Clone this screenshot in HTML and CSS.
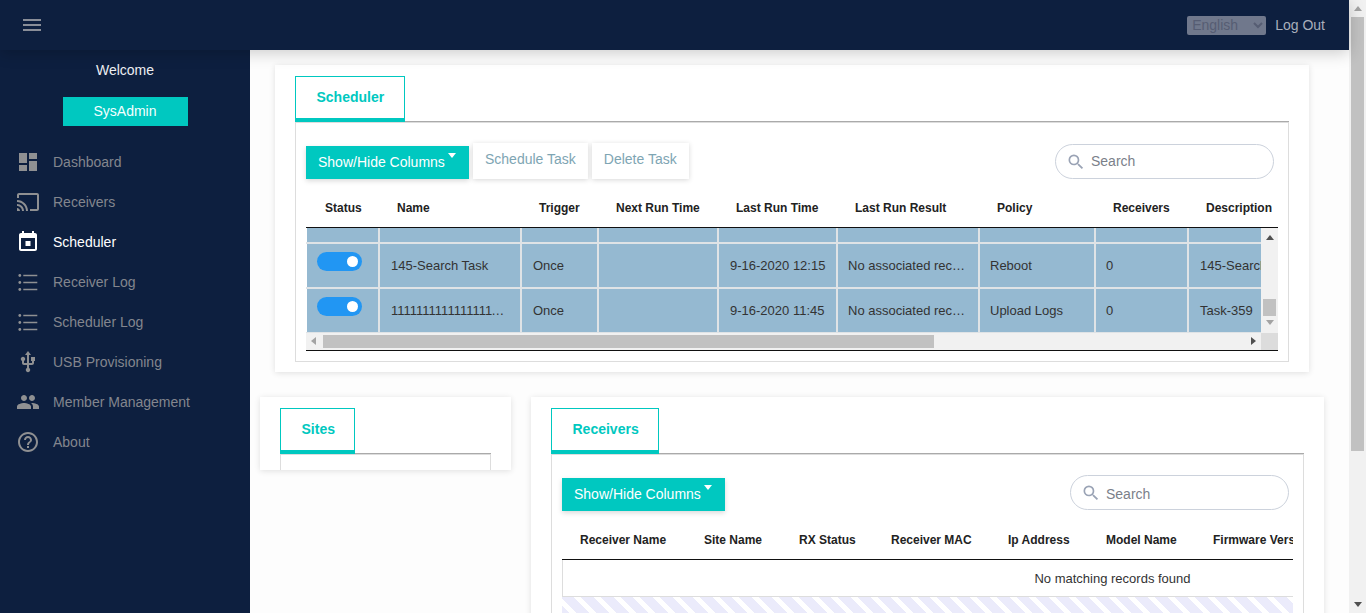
FILE: index.html
```html
<!DOCTYPE html>
<html lang="en">
<head>
<meta charset="utf-8">
<title>Scheduler</title>
<link rel="stylesheet" href="styles.css">
</head>
<body>
<div class="app">
  <div class="page">
    <header class="topbar">
      <button class="burger" aria-label="Menu"><span></span><span></span><span></span></button>
      <div class="top-right">
        <select class="lang"><option>English</option></select>
        <a class="logout">Log Out</a>
      </div>
    </header>
    <div class="below">
      <aside class="sidebar">
        <div class="welcome">Welcome</div>
        <div class="role">SysAdmin</div>
        <nav class="menu">
          <a class="item"><svg class="ico" viewBox="0 0 24 24"><path d="M3 13h8V3H3v10zm0 8h8v-6H3v6zm10 0h8V11h-8v10zm0-18v6h8V3h-8z"/></svg>Dashboard</a>
          <a class="item"><svg class="ico" viewBox="0 0 24 24"><path d="M21 3H3c-1.1 0-2 .9-2 2v3h2V5h18v14h-7v2h7c1.1 0 2-.9 2-2V5c0-1.1-.9-2-2-2zM1 18v3h3c0-1.66-1.34-3-3-3zm0-4v2c2.76 0 5 2.24 5 5h2c0-3.87-3.13-7-7-7zm0-4v2c4.97 0 9 4.03 9 9h2c0-6.08-4.93-11-11-11z"/></svg>Receivers</a>
          <a class="item active"><svg class="ico" viewBox="0 0 24 24"><path d="M19 3h-1V1h-2v2H8V1H6v2H5c-1.11 0-1.99.9-1.99 2L3 19c0 1.1.89 2 2 2h14c1.1 0 2-.9 2-2V5c0-1.1-.9-2-2-2zm0 16H5V8h14v11zM9.5 11h5v5h-5z"/></svg>Scheduler</a>
          <a class="item"><svg class="ico" viewBox="0 0 24 24"><path d="M7.3 4.7h14v1.6h-14zM7.3 11.7h14v1.6h-14zM7.3 18.7h14v1.6h-14z"/><circle cx="3.8" cy="5.5" r="1.4"/><circle cx="3.8" cy="12.5" r="1.4"/><circle cx="3.8" cy="19.5" r="1.4"/></svg>Receiver Log</a>
          <a class="item"><svg class="ico" viewBox="0 0 24 24"><path d="M7.3 4.7h14v1.6h-14zM7.3 11.7h14v1.6h-14zM7.3 18.7h14v1.6h-14z"/><circle cx="3.8" cy="5.5" r="1.4"/><circle cx="3.8" cy="12.5" r="1.4"/><circle cx="3.8" cy="19.5" r="1.4"/></svg>Scheduler Log</a>
          <a class="item"><svg class="ico" viewBox="0 0 24 24"><path d="M15 7v4h1v2h-3V5h2l-3-4-3 4h2v8H8v-2.07c.7-.37 1.2-1.08 1.2-1.93 0-1.21-.99-2.2-2.2-2.2-1.21 0-2.2.99-2.2 2.2 0 .85.5 1.56 1.2 1.93V13c0 1.11.89 2 2 2h3v3.05c-.71.37-1.2 1.1-1.2 1.95 0 1.22.99 2.2 2.2 2.2 1.21 0 2.2-.98 2.2-2.2 0-.85-.49-1.58-1.2-1.95V15h3c1.11 0 2-.89 2-2v-2h1V7h-4z"/></svg>USB Provisioning</a>
          <a class="item"><svg class="ico" viewBox="0 0 24 24"><path d="M16 11c1.66 0 2.99-1.34 2.99-3S17.66 5 16 5c-1.66 0-3 1.34-3 3s1.34 3 3 3zm-8 0c1.66 0 2.99-1.34 2.99-3S9.66 5 8 5C6.34 5 5 6.34 5 8s1.34 3 3 3zm0 2c-2.33 0-7 1.17-7 3.5V19h14v-2.5c0-2.33-4.67-3.5-7-3.5zm8 0c-.29 0-.62.02-.97.05 1.16.84 1.97 1.97 1.97 3.45V19h6v-2.5c0-2.33-4.67-3.5-7-3.5z"/></svg>Member Management</a>
          <a class="item"><svg class="ico" viewBox="0 0 24 24"><path d="M11 18h2v-2h-2v2zm1-16C6.48 2 2 6.48 2 12s4.48 10 10 10 10-4.48 10-10S17.52 2 12 2zm0 18c-4.41 0-8-3.59-8-8s3.59-8 8-8 8 3.59 8 8-3.59 8-8 8zm0-14c-2.21 0-4 1.79-4 4h2c0-1.1.9-2 2-2s2 .9 2 2c0 2-3 1.75-3 5h2c0-2.25 3-2.5 3-5 0-2.21-1.79-4-4-4z"/></svg>About</a>
        </nav>
      </aside>
      <main class="main">
        <section class="card card-scheduler">
          <div class="tabs"><div class="tab">Scheduler</div></div>
          <div class="panel">
            <div class="toolbar">
              <button class="btn-primary">Show/Hide Columns<i class="caret"></i></button>
              <button class="btn-muted">Schedule Task</button>
              <button class="btn-muted">Delete Task</button>
              <label class="search">
                <svg class="search-ico" viewBox="0 0 24 24"><path d="M15.5 14h-.79l-.28-.27A6.47 6.47 0 0 0 16 9.5 6.5 6.5 0 1 0 9.5 16c1.61 0 3.09-.59 4.23-1.57l.27.28v.79l5 4.99L20.49 19l-4.99-5zm-6 0C7.01 14 5 11.99 5 9.5S7.01 5 9.5 5 14 7.01 14 9.5 11.99 14 9.5 14z"/></svg>
                <input placeholder="Search">
              </label>
            </div>
            <div class="head-clip">
              <table class="grid sched-grid">
                <colgroup><col class="s1"><col class="s2"><col class="s3"><col class="s4"><col class="s5"><col class="s6"><col class="s7"><col class="s8"><col class="s9"></colgroup>
                <thead><tr>
                  <th class="th-first">Status</th><th>Name</th><th>Trigger</th><th>Next Run Time</th><th>Last Run Time</th><th>Last Run Result</th><th>Policy</th><th>Receivers</th><th>Description</th>
                </tr></thead>
              </table>
            </div>
            <div class="scroll-body">
              <div class="viewport">
                <table class="grid sched-grid body-grid">
                  <colgroup><col class="s1"><col class="s2"><col class="s3"><col class="s4"><col class="s5"><col class="s6"><col class="s7"><col class="s8"><col class="s9"></colgroup>
                  <tbody>
                    <tr class="stub"><td></td><td></td><td></td><td></td><td></td><td></td><td></td><td></td><td></td></tr>
                    <tr>
                      <td class="td-toggle"><span class="toggle"><i></i></span></td>
                      <td class="td-wide">145-Search Task</td><td class="td-wide">Once</td><td></td><td class="td-wide">9-16-2020 12:15</td><td>No associated receivers</td><td>Reboot</td><td>0</td><td class="td-wide">145-Search Task</td>
                    </tr>
                    <tr>
                      <td class="td-toggle"><span class="toggle"><i></i></span></td>
                      <td class="td-wide">11111111111111111111111</td><td class="td-wide">Once</td><td></td><td class="td-wide">9-16-2020 11:45</td><td>No associated receivers</td><td>Upload Logs</td><td>0</td><td class="td-wide">Task-359</td>
                    </tr>
                  </tbody>
                </table>
              </div>
              <div class="vbar">
                <i class="arrow up"></i>
                <i class="vthumb"></i>
                <i class="arrow down dim"></i>
              </div>
            </div>
            <div class="hbar-row">
              <div class="hbar">
                <i class="arrow left dim"></i>
                <i class="hthumb"></i>
                <i class="arrow right"></i>
              </div>
              <div class="corner"></div>
            </div>
          </div>
        </section>
        <div class="lower">
          <section class="card card-sites">
            <div class="tabs"><div class="tab">Sites</div></div>
            <div class="panel panel-open"></div>
          </section>
          <section class="card card-receivers">
            <div class="tabs"><div class="tab">Receivers</div></div>
            <div class="panel panel-open">
              <div class="toolbar toolbar-alt">
                <button class="btn-primary">Show/Hide Columns<i class="caret"></i></button>
                <label class="search">
                  <svg class="search-ico" viewBox="0 0 24 24"><path d="M15.5 14h-.79l-.28-.27A6.47 6.47 0 0 0 16 9.5 6.5 6.5 0 1 0 9.5 16c1.61 0 3.09-.59 4.23-1.57l.27.28v.79l5 4.99L20.49 19l-4.99-5zm-6 0C7.01 14 5 11.99 5 9.5S7.01 5 9.5 5 14 7.01 14 9.5 11.99 14 9.5 14z"/></svg>
                  <input placeholder="Search">
                </label>
              </div>
              <div class="head-clip">
                <table class="grid rec-grid">
                  <colgroup><col class="r1"><col class="r2"><col class="r3"><col class="r4"><col class="r5"><col class="r6"><col class="r7"></colgroup>
                  <thead><tr>
                    <th>Receiver Name</th><th>Site Name</th><th>RX Status</th><th>Receiver MAC</th><th>Ip Address</th><th>Model Name</th><th>Firmware Version</th>
                  </tr></thead>
                  <tbody>
                    <tr class="empty"><td colspan="7">No matching records found</td></tr>
                  </tbody>
                </table>
              </div>
              <div class="stripes"></div>
            </div>
          </section>
        </div>
      </main>
    </div>
  </div>
  <div class="page-scroll">
    <i class="arrow up"></i>
    <i class="page-thumb"></i>
    <i class="arrow down dark"></i>
  </div>
</div>
</body>
</html>
```
FILE: styles.css
```css
* { box-sizing: border-box; }
html, body { margin: 0; height: 100%; overflow: hidden; }
body { font-family: "Liberation Sans", Arial, sans-serif; font-size: 14px; color: #333; background: #fff; }
button { font-family: inherit; }

.app { display: flex; height: 100vh; }
.page { flex: 1; min-width: 0; display: flex; flex-direction: column; }

/* top bar */
.topbar { height: 50px; flex: none; background: #0d1f3f; display: flex; align-items: center; justify-content: space-between; position: relative; z-index: 2; box-shadow: 0 3px 15px rgba(0,0,0,.2); padding: 0 24px 0 23px; }
.burger { width: 18px; height: 12px; padding: 0; border: 0; background: none; display: flex; flex-direction: column; justify-content: space-between; }
.burger span { display: block; height: 2px; background: #8a8e98; }
.top-right { display: flex; align-items: center; gap: 9px; }
.lang { width: 79px; height: 19px; padding: 0 0 2px 1px; border: 0; border-radius: 2px; background-color: #70788c; color: #565d73; font-family: inherit; font-size: 14px; }
.logout { color: #a9afbb; font-size: 14px; }

.below { flex: 1; display: flex; min-height: 0; }

/* sidebar */
.sidebar { width: 250px; flex: none; background: #0d1f3f; padding-top: 10px; }
.welcome { color: #eceef2; text-align: center; line-height: 20px; }
.role { width: 125px; height: 29px; margin: 17px auto 16px; background: #00c8c0; color: #f4ffff; text-align: center; line-height: 29px; }
.item { height: 40px; display: flex; align-items: center; gap: 13px; padding-left: 16px; color: #83868e; }
.item.active { color: #fff; }
.ico { width: 24px; height: 24px; fill: #8f9092; flex: none; }
.item.active .ico { fill: #fff; }

/* main */
.main { flex: 1; min-width: 0; overflow: hidden; background: #fdfdfd; padding-top: 15px; }
.card { background: #fff; box-shadow: 0 1px 6px rgba(0,0,0,.12); padding: 11px 20px 10px; }
.card-scheduler { margin: 0 40px 25px 25px; }
.lower { display: flex; align-items: flex-start; gap: 20px; padding: 0 25px 0 10px; }
.card-sites { width: 251px; height: 73px; overflow: hidden; padding-bottom: 0; flex: none; }
.card-receivers { flex: 1; min-width: 0; padding-bottom: 0; height: 300px; overflow: hidden; }

.tabs { height: 46px; display: flex; border-bottom: 1px solid #aaa; }
.tab { height: 46px; padding: 0 19.5px 0 20.5px; border: 1px solid #00c8c0; border-bottom-width: 4px; background: #fff; color: #00c8c0; font-weight: 700; line-height: 41px; }
.panel { border: 1px solid #ddd; padding: 20px 10px 10px; }
.panel-open { border-bottom: 0; height: 400px; }

.toolbar { height: 36px; display: flex; align-items: flex-end; gap: 4px; }
.btn-primary { width: 163px; height: 33px; padding: 0 0 2px 12px; border: 0; background: #00c8c0; color: #fff; font-size: 14px; display: flex; align-items: center; box-shadow: 0 2px 5px rgba(0,0,0,.15); }
.caret { width: 0; height: 0; margin: -12px 0 0 3px; border: 4.5px solid transparent; border-top: 5px solid #fff; border-bottom: 0; }
.btn-muted { height: 36px; padding: 0 12px 5px; border: 0; background: #fff; color: #7ea5b3; font-size: 14px; box-shadow: 0 1px 5px rgba(0,0,0,.16); }
.search { width: 219px; height: 35px; margin-left: auto; margin-right: 4px; display: flex; align-items: center; gap: 5px; padding: 1px 0 0 10px; border: 1px solid #ccd2dc; border-radius: 18px; }
.toolbar-alt .search { margin-bottom: 1px; }
.toolbar-alt .search input { padding: 2px 0 0; }
.search-ico { width: 20px; height: 20px; fill: #9aa3b5; flex: none; }
.search input { flex: 1; min-width: 0; border: 0; outline: 0; padding: 0 0 2px; background: none; font: 14px "Liberation Sans", Arial, sans-serif; }
.search input::placeholder { color: #7b7f8a; opacity: 1; }

/* tables */
.head-clip { margin-top: 10px; overflow: hidden; }
.grid { border-collapse: separate; border-spacing: 0; table-layout: fixed; }
.sched-grid { width: 1003px; }
.s1 { width: 74px; } .s2 { width: 142px; } .s3 { width: 77px; } .s4 { width: 120px; } .s5 { width: 119px; } .s6 { width: 142px; } .s7 { width: 116px; } .s8 { width: 93px; } .s9 { width: 120px; }
th { height: 39px; padding: 0 0 0 17px; border-bottom: 1px solid #111; color: #222; font-size: 12px; font-weight: 700; text-align: left; white-space: nowrap; overflow: hidden; }
.rec-grid th { padding-left: 18px; }
th.th-first { padding-left: 19px; }
.scroll-body { display: flex; height: 105px; }
.viewport { flex: 1; min-width: 0; overflow: hidden; }
.body-grid td { height: 45px; padding: 0 11px 0 10px; background: #95b9d1; border-right: 2px solid #dfe3e6; border-bottom: 2px solid #dfe3e6; font-size: 13px; color: #333; white-space: nowrap; overflow: hidden; text-overflow: ellipsis; }
.body-grid td.td-wide { padding: 0 10px 0 11px; }
.body-grid td:first-child { box-shadow: inset 1px 0 0 #fff; }
.body-grid .stub td { height: 16px; }
.body-grid .td-toggle { padding: 0 0 8px 11px; }
.toggle { display: flex; align-items: center; justify-content: flex-end; width: 45px; height: 19px; padding-right: 4px; border-radius: 10px; background: #2196f3; }
.toggle i { width: 11px; height: 11px; border-radius: 50%; background: #fff; }

/* drawn scrollbars */
.arrow { display: block; width: 0; height: 0; flex: none; border: 4px solid transparent; }
.arrow.up { border-top: 0; border-bottom: 5px solid #505050; }
.arrow.down { border-bottom: 0; border-top: 5px solid #a3a3a3; }
.arrow.down.dark { border-top-color: #505050; }
.arrow.left { border-left: 0; border-right: 5px solid #505050; }
.arrow.right { border-right: 0; border-left: 5px solid #505050; }
.arrow.left.dim { border-right-color: #a3a3a3; }
.vbar { width: 17px; flex: none; background: #f1f1f1; display: flex; flex-direction: column; align-items: center; padding: 7px 0 8px; }
.vthumb { display: block; width: 13px; height: 17px; background: #c1c1c1; margin: auto 0 4px; }
.hbar-row { display: flex; height: 18px; border-bottom: 1px solid #111; }
.hbar { flex: 1; min-width: 0; background: #f1f1f1; display: flex; align-items: center; padding: 0 5px 1px 5px; }
.hthumb { display: block; width: 611px; height: 13px; background: #c1c1c1; margin: 0 auto 0 7px; }
.corner { width: 17px; flex: none; background: #dcdcdc; }

/* receivers */
.rec-grid { width: 1101px; }
.r1 { width: 124px; } .r2 { width: 95px; } .r3 { width: 92px; } .r4 { width: 117px; } .r5 { width: 98px; } .r6 { width: 107px; } .r7 { width: 468px; }
.empty td { height: 37px; border: 1px solid #ddd; border-top: 0; background: #fff; font-size: 13px; color: #333; text-align: center; padding: 0; }
.stripes { height: 120px; background: repeating-linear-gradient(45deg, #ebebfb 0 9px, #fff 9px 14px); }

/* page scrollbar */
.page-scroll { width: 17px; flex: none; background: #f1f1f1; display: flex; flex-direction: column; align-items: center; padding: 6px 0 6px; }
.page-scroll .arrow.up { border-bottom-color: #a3a3a3; }
.page-thumb { display: block; width: 13px; height: 434px; margin: 6px 0 auto; background: #c1c1c1; }
```
